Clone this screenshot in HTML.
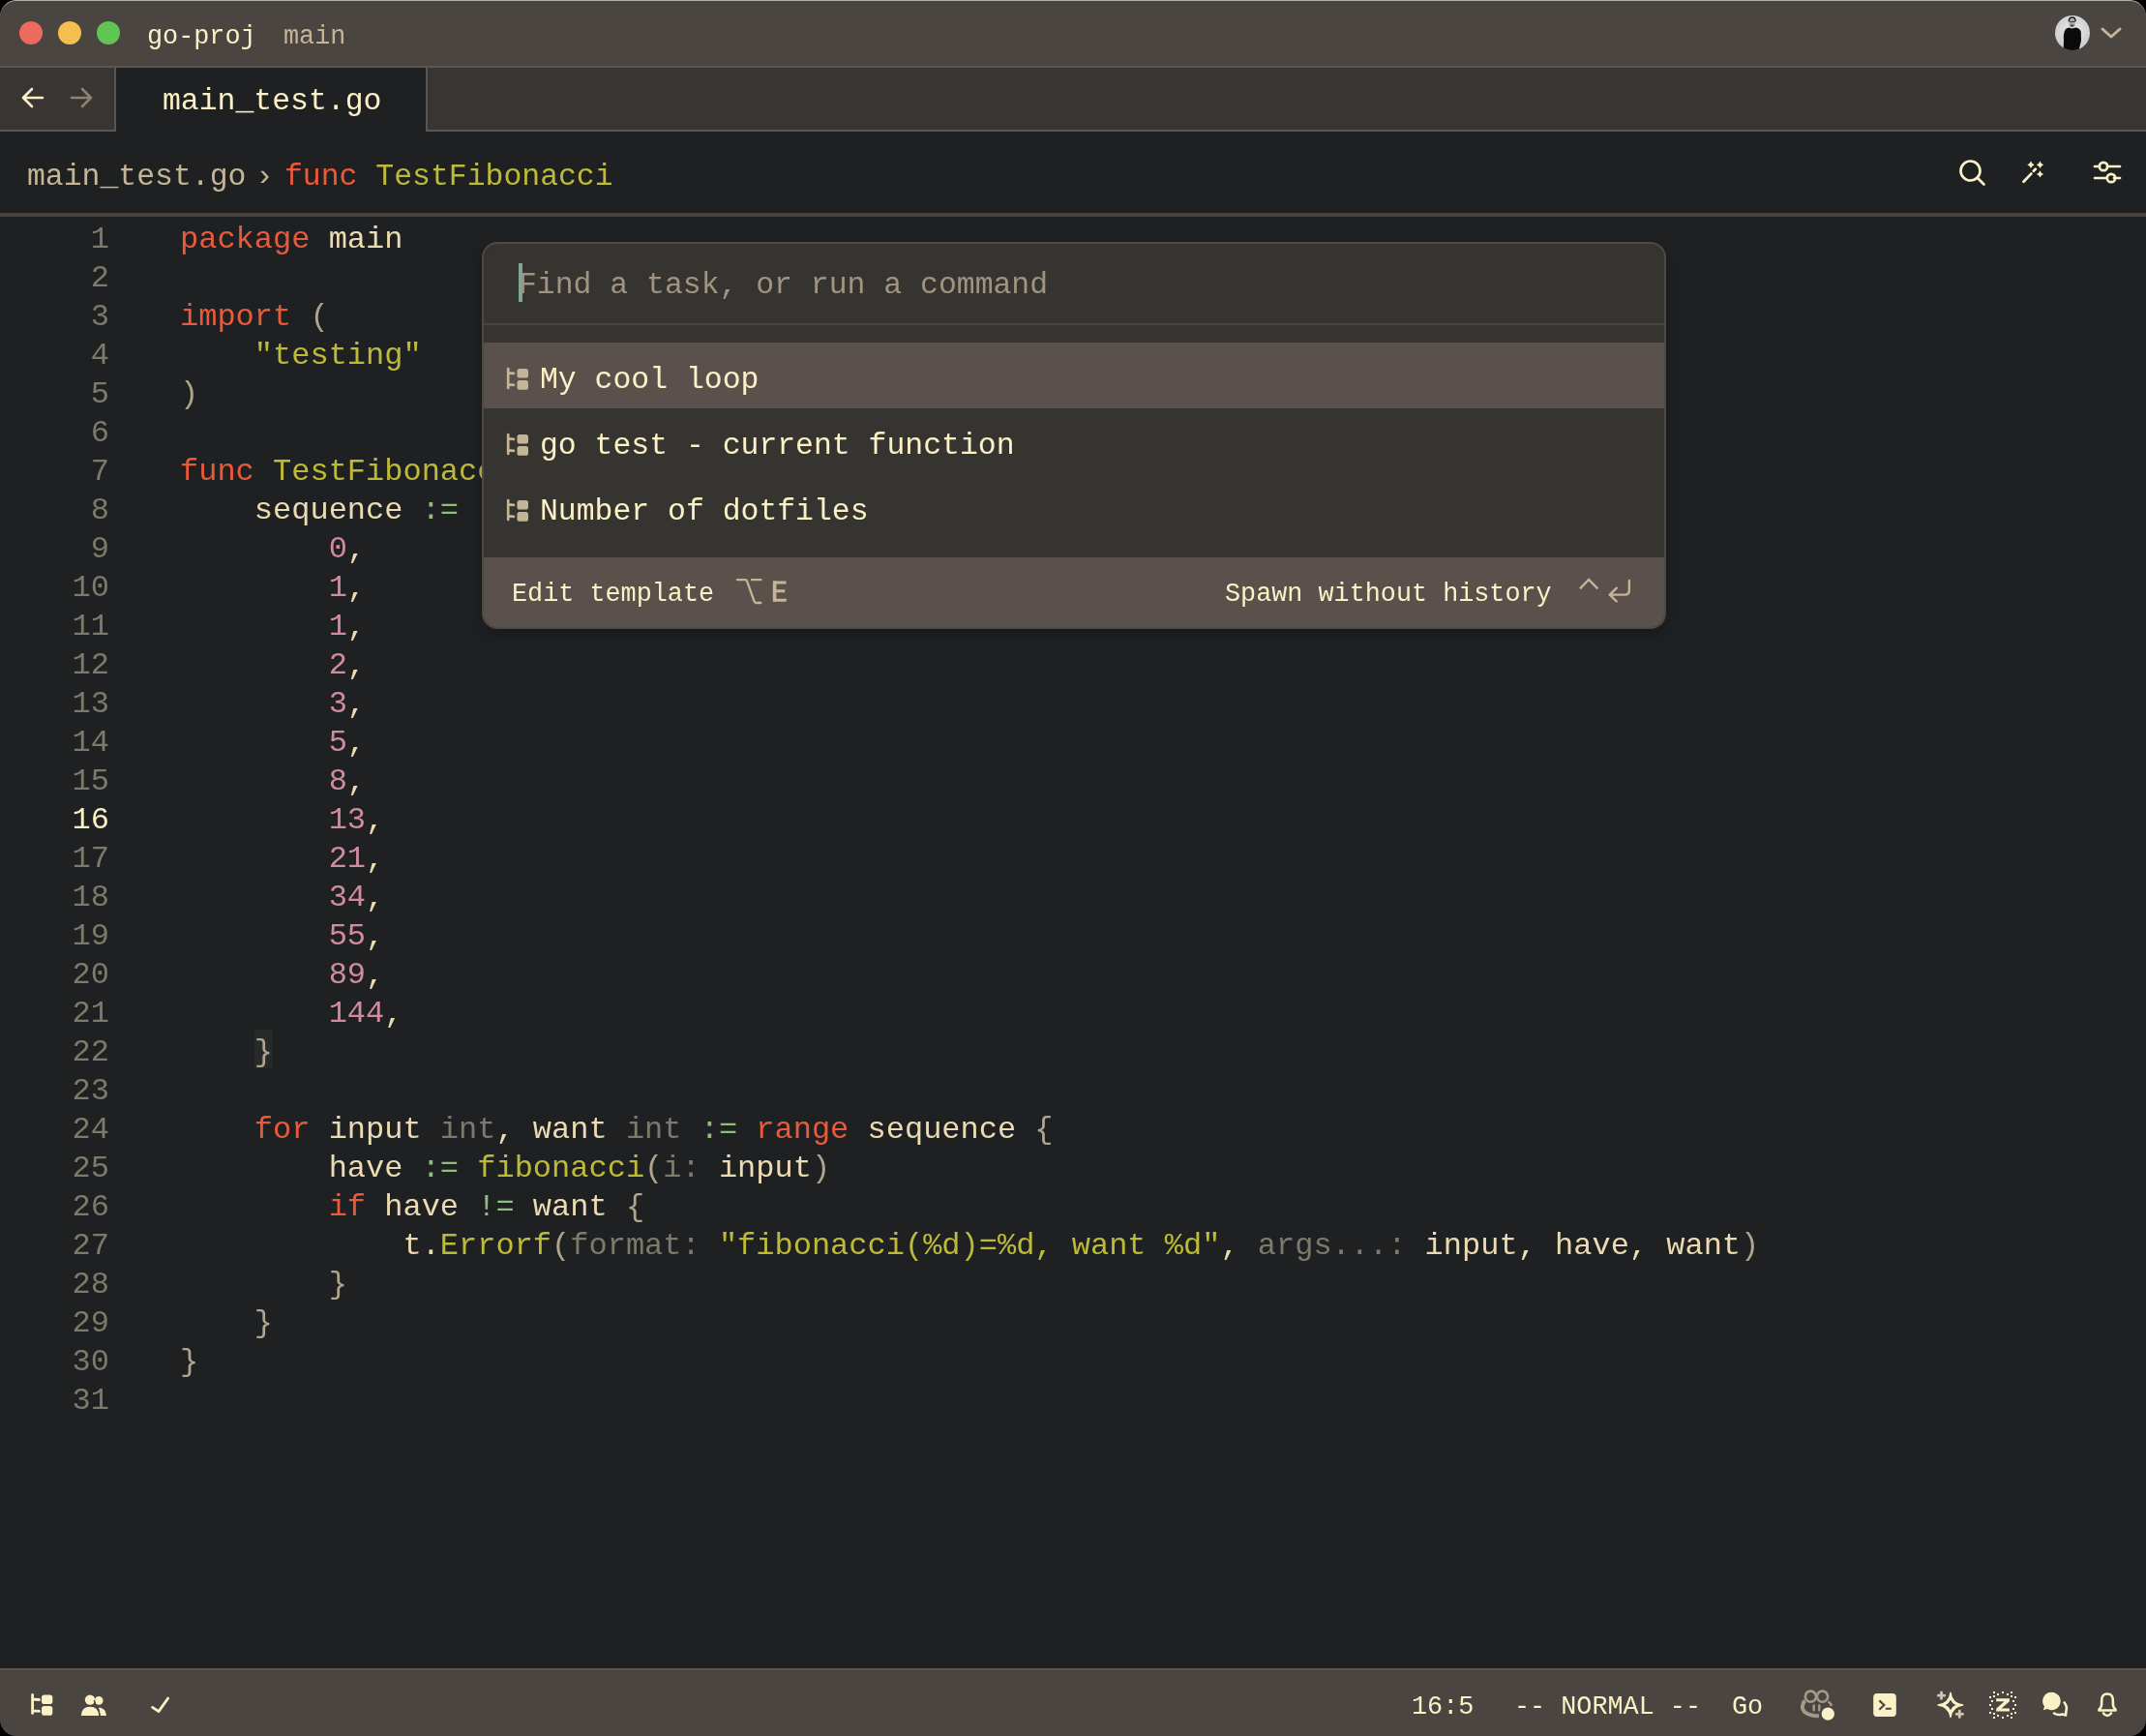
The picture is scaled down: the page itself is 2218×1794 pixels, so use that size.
<!DOCTYPE html>
<html><head><meta charset="utf-8">
<style>
*{margin:0;padding:0;box-sizing:border-box}
html,body{width:2218px;height:1794px;background:#000;overflow:hidden}
body{font-family:"Liberation Mono",monospace;color:#fbf1c7;position:relative}
#win{position:absolute;left:0;top:0;width:2218px;height:1794px;border-radius:17px;overflow:hidden;background:#1f2022;will-change:transform}
.abs{position:absolute}
.t{position:absolute;white-space:pre;line-height:40px}
.ui{font-size:31.45px}
.sm{font-size:26.8px}
.code{font-size:32px}
/* syntax */
.k{color:#e95a3b}.f{color:#bcba38}.n{color:#d08aa2}.o{color:#8fbf7f}.p{color:#b0a48e}.v{color:#ebdbb2}.h{color:#7c7a6b}
</style></head><body>
<svg width="0" height="0" style="position:absolute"><defs>
<g id="taskico"><path d="M3.2 2 V22 M3.2 6.3 Q6 6.3 9 6.8 M3.2 18.3 Q6 18.3 9 18.8" stroke-width="2.7" stroke-linecap="round" fill="none"/><rect x="12.5" y="2" width="11.5" height="9.6" rx="2.6" stroke="none"/><rect x="12.5" y="14" width="11.5" height="9.8" rx="2.6" stroke="none"/></g>
</defs></svg>
<div id="win">
  <!-- title bar -->
  <div class="abs" style="left:0;top:0;width:2218px;height:68px;background:#4a4541"></div>
  <div class="abs" style="left:0;top:0;width:2218px;height:40px;border-top:1.6px solid #b3b1ad;border-radius:17px 17px 0 0"></div>
  <div class="abs" style="left:0;top:68px;width:2218px;height:2px;background:#5d554f"></div>
  <div class="abs" style="left:20px;top:22px;width:24px;height:24px;border-radius:50%;background:#ed6a5e"></div>
  <div class="abs" style="left:60px;top:22px;width:24px;height:24px;border-radius:50%;background:#f4bf4f"></div>
  <div class="abs" style="left:100px;top:22px;width:24px;height:24px;border-radius:50%;background:#61c554"></div>
  <div class="t sm" style="left:152px;top:18px;color:#fbf1c7">go-proj</div>
  <div class="t sm" style="left:293px;top:18px;color:#c5b597">main</div>
  <!-- avatar -->
  <svg class="abs" style="left:2124px;top:16px" width="36" height="36" viewBox="0 0 36 36">
    <defs><clipPath id="av"><circle cx="18" cy="18" r="18"/></clipPath>
    <radialGradient id="avg" cx="0.5" cy="0.45" r="0.6"><stop offset="0" stop-color="#ececec"/><stop offset="1" stop-color="#c9c9c9"/></radialGradient></defs>
    <g clip-path="url(#av)">
      <rect width="36" height="36" fill="url(#avg)"/>
      <ellipse cx="17.6" cy="8" rx="3.2" ry="4.6" fill="#a8a8a8"/>
      <path d="M14.2 6.2 Q14.5 2 17.8 2 Q21 2 21.2 6.2" fill="none" stroke="#1a1a1a" stroke-width="1.4"/>
      <path d="M15 6.5 H20.5" stroke="#333" stroke-width="0.9"/>
      <path d="M16.2 9.6 Q17.5 11.8 19 9.8" fill="none" stroke="#2a2a2a" stroke-width="1.3"/>
      <path d="M8.6 36 L9 26 Q8.4 20 9.8 16 Q10.6 13.2 14 12.4 L17.5 13.4 L21.5 12.4 Q26 13 26.8 17 L27 26 L24.5 36 Z" fill="#0b0b0b"/>
    </g>
  </svg>
  <svg class="abs" style="left:2170px;top:26px" width="24" height="16" viewBox="0 0 24 16"><path d="M3 4 L12 12 L21 4" fill="none" stroke="#c5b597" stroke-width="3" stroke-linecap="round" stroke-linejoin="round"/></svg>

  <!-- tab bar -->
  <div class="abs" style="left:0;top:70px;width:2218px;height:66px;background:#383532"></div>
  <div class="abs" style="left:0;top:134px;width:2218px;height:2px;background:#5d554f"></div>
  <div class="abs" style="left:118px;top:70px;width:2px;height:66px;background:#5d554f"></div>
  <div class="abs" style="left:120px;top:70px;width:320px;height:66px;background:#1f2022"></div>
  <div class="abs" style="left:440px;top:70px;width:2px;height:66px;background:#5d554f"></div>
  <svg class="abs" style="left:20px;top:88px" width="28" height="26" viewBox="0 0 28 26"><path d="M24 13 H5 M13 4 L4 13 L13 22" fill="none" stroke="#fbf1c7" stroke-width="2.6" stroke-linecap="round" stroke-linejoin="round"/></svg>
  <svg class="abs" style="left:70px;top:88px" width="28" height="26" viewBox="0 0 28 26"><path d="M4 13 H23 M15 4 L24 13 L15 22" fill="none" stroke="#8e8372" stroke-width="2.6" stroke-linecap="round" stroke-linejoin="round"/></svg>
  <div class="t ui" style="left:168px;top:85px;color:#fbf1c7">main_test.go</div>

  <!-- toolbar -->
  <div class="abs" style="left:0;top:220px;width:2218px;height:4px;background:#48433f"></div>
  <div class="t ui" style="left:28px;top:163px;color:#c5b597">main_test.go</div>
  <div class="t ui" style="left:264px;top:163px;color:#c5b597">›</div>
  <div class="t ui" style="left:294px;top:163px"><span class="k">func</span> <span class="f">TestFibonacci</span></div>
  <svg class="abs" style="left:2020px;top:160px" width="36" height="36" viewBox="0 0 36 36"><circle cx="16.5" cy="16.5" r="10" fill="none" stroke="#fbf1c7" stroke-width="2.7"/><path d="M24 24 L30.5 30.5" stroke="#fbf1c7" stroke-width="2.7" stroke-linecap="round"/></svg>
  <svg class="abs" style="left:2084px;top:160px" width="36" height="36" viewBox="0 0 36 36">
    <path d="M7.5 27.7 L15.3 19.6" stroke="#fbf1c7" stroke-width="2.8" stroke-linecap="round"/>
    <path d="M17.8 16.8 L19.8 14.8" stroke="#fbf1c7" stroke-width="2.8" stroke-linecap="round"/>
    <path d="M15 6.6000000000000005 Q15.9 9.4 18.7 10.3 Q15.9 11.200000000000001 15 14.0 Q14.1 11.200000000000001 11.3 10.3 Q14.1 9.4 15 6.6000000000000005 Z M24.5 6.6000000000000005 Q25.4 9.4 28.2 10.3 Q25.4 11.200000000000001 24.5 14.0 Q23.6 11.200000000000001 20.8 10.3 Q23.6 9.4 24.5 6.6000000000000005 Z M24.5 16.2 Q25.4 19.0 28.2 19.9 Q25.4 20.799999999999997 24.5 23.599999999999998 Q23.6 20.799999999999997 20.8 19.9 Q23.6 19.0 24.5 16.2 Z" fill="#fbf1c7"/>
  </svg>
  <svg class="abs" style="left:2160px;top:160px" width="36" height="36" viewBox="0 0 36 36">
    <path d="M5 12 H10 M18 12 H31 M5 24 H17 M25 24 H31" stroke="#fbf1c7" stroke-width="2.7" stroke-linecap="round"/>
    <circle cx="14" cy="12" r="4.2" fill="none" stroke="#fbf1c7" stroke-width="2.7"/>
    <circle cx="22" cy="24" r="4.2" fill="none" stroke="#fbf1c7" stroke-width="2.7"/>
  </svg>

  <!-- editor -->
  <div class="abs" style="left:263px;top:1064px;width:19px;height:40px;background:#262b2a"></div>
  <div class="t code" id="gutter" style="left:0;top:228px;width:113px;text-align:right;color:#7c7a6b">1
2
3
4
5
6
7
8
9
10
11
12
13
14
15
<span style="color:#fbf1c7">16</span>
17
18
19
20
21
22
23
24
25
26
27
28
29
30
31</div>
  <div class="t code v" id="code" style="left:186px;top:228px"><span class="k">package</span> main

<span class="k">import</span> <span class="p">(</span>
    <span class="f">"testing"</span>
<span class="p">)</span>

<span class="k">func</span> <span class="f">TestFibonacci</span><span class="p">(</span>t *testing.T<span class="p">)</span> <span class="p">{</span>
    sequence <span class="o">:=</span> []int{
        <span class="n">0</span>,
        <span class="n">1</span>,
        <span class="n">1</span>,
        <span class="n">2</span>,
        <span class="n">3</span>,
        <span class="n">5</span>,
        <span class="n">8</span>,
        <span class="n">13</span>,
        <span class="n">21</span>,
        <span class="n">34</span>,
        <span class="n">55</span>,
        <span class="n">89</span>,
        <span class="n">144</span>,
    <span class="p">}</span>

    <span class="k">for</span> input <span class="h">int</span>, want <span class="h">int</span> <span class="o">:=</span> <span class="k">range</span> sequence <span class="p">{</span>
        have <span class="o">:=</span> <span class="f">fibonacci</span><span class="p">(</span><span class="h">i:</span> input<span class="p">)</span>
        <span class="k">if</span> have <span class="o">!=</span> want <span class="p">{</span>
            t.<span class="f">Errorf</span><span class="p">(</span><span class="h">format:</span> <span class="f">"fibonacci(%d)=%d, want %d"</span>, <span class="h">args...:</span> input, have, want<span class="p">)</span>
        <span class="p">}</span>
    <span class="p">}</span>
<span class="p">}</span>
</div>

  
  <div class="abs" style="left:498px;top:250px;width:1224px;height:400px;border:2px solid #504843;border-radius:16px;background:#363431;overflow:hidden;box-shadow:0 6px 14px rgba(0,0,0,0.22)">
    <div class="abs" style="left:0;top:82px;width:1220px;height:2px;background:#4b4440"></div>
    <div class="abs" style="left:36px;top:20px;width:4px;height:40px;background:#83a598"></div>
    <div class="t ui" style="left:36px;top:23px;color:#a09380">Find a task, or run a command</div>
    <div class="abs" style="left:0;top:102px;width:1220px;height:68px;background:#5a514c"></div>
    <svg class="abs" style="left:22px;top:127px" width="26" height="24" viewBox="0 0 26 24"><use href="#taskico" fill="#c5b597" stroke="#c5b597"/></svg>
    <svg class="abs" style="left:22px;top:195px" width="26" height="24" viewBox="0 0 26 24"><use href="#taskico" fill="#c5b597" stroke="#c5b597"/></svg>
    <svg class="abs" style="left:22px;top:263px" width="26" height="24" viewBox="0 0 26 24"><use href="#taskico" fill="#c5b597" stroke="#c5b597"/></svg>
    <div class="t ui" style="left:58px;top:121px">My cool loop</div>
    <div class="t ui" style="left:58px;top:189px">go test - current function</div>
    <div class="t ui" style="left:58px;top:257px">Number of dotfiles</div>
    <div class="abs" style="left:0;top:323.5px;width:1220px;height:80px;background:#5a514c"></div>
    <div class="t sm" style="left:29px;top:342px">Edit template</div>
    <svg class="abs" style="left:258px;top:340px" width="34" height="36" viewBox="0 0 34 36"><path d="M4 7.2 H12.3 Q13.6 7.2 14.1 8.6 L21.6 29.6 Q22.1 31 23.6 31 H28.4 M19 7.2 H28.4" fill="none" stroke="#c5b597" stroke-width="2.3" stroke-linecap="round"/></svg>
    <svg class="abs" style="left:296px;top:346px" width="20" height="30" viewBox="0 0 20 30"><path d="M4.6 2.5 V23.6" stroke="#c5b597" stroke-width="3.6"/><path d="M3 4 H16.5 M3 12.8 H15.2 M3 22.3 H16.8" fill="none" stroke="#c5b597" stroke-width="3"/></svg>
    <div class="t sm" style="left:766px;top:342px">Spawn without history</div>
    <svg class="abs" style="left:1130px;top:340px" width="26" height="22" viewBox="0 0 26 22"><path d="M3 16.4 L12 7 L21.4 16.4" fill="none" stroke="#c5b597" stroke-width="2.3"/></svg>
    <svg class="abs" style="left:1160px;top:346px" width="30" height="32" viewBox="0 0 30 32"><path d="M23.9 2 V12 Q23.9 16.6 19.3 16.6 H4 M10.8 9.7 L3.7 16.6 L10.8 23.5" fill="none" stroke="#c5b597" stroke-width="2.4" stroke-linecap="round" stroke-linejoin="round"/></svg>
  </div>


  <!-- status bar -->
  <div class="abs" style="left:0;top:1724px;width:2218px;height:70px;background:#4a4541"></div>
  <div class="abs" style="left:0;top:1724px;width:2218px;height:2px;background:#5d554f"></div>
  
  <svg class="abs" style="left:30px;top:1749px" width="27" height="26" viewBox="0 0 27 26"><g transform="translate(0,0)"><path d="M3.6 2.5 V21.5 M3.6 7 Q7 7 10.5 7.5 M3.6 18.8 Q7 18.8 10.5 19.3" stroke="#fbf1c7" stroke-width="2.8" stroke-linecap="round" fill="none"/><rect x="13" y="2.6" width="11.3" height="9.4" rx="2.8" fill="#fbf1c7"/><rect x="13" y="13.9" width="11.3" height="9.8" rx="2.8" fill="#fbf1c7"/></g></svg>
  <svg class="abs" style="left:82px;top:1748px" width="30" height="27" viewBox="0 0 30 27">
    <circle cx="11" cy="8.6" r="5.2" fill="#fbf1c7"/>
    <circle cx="20.2" cy="9.4" r="4.3" fill="#fbf1c7"/>
    <path d="M20 16.5 Q27.5 17 28 25 H21.5 Z" fill="#fbf1c7"/>
    <path d="M1.9 25 Q2.3 15.8 11 15.8 Q19.7 15.8 20.2 25 Z" fill="#fbf1c7"/>
    <path d="M15.2 9 A5.6 5.6 0 0 1 16.2 13.5" stroke="#4a4541" stroke-width="1.3" fill="none"/>
    <path d="M19 17.2 Q20.8 20 21.2 25" stroke="#4a4541" stroke-width="1.4" fill="none"/>
  </svg>
  <svg class="abs" style="left:154px;top:1751px" width="24" height="21" viewBox="0 0 24 21"><path d="M3.5 13.3 L10 17.6 L19.7 4" fill="none" stroke="#fbf1c7" stroke-width="2.7" stroke-linecap="round" stroke-linejoin="round"/></svg>
  <div class="t sm" style="left:1459px;top:1744px">16:5</div>
  <div class="t sm" style="left:1565px;top:1744px">-- NORMAL --</div>
  <div class="t sm" style="left:1790px;top:1744px">Go</div>
  <svg class="abs" style="left:1860px;top:1744px" width="40" height="36" viewBox="0 0 40 36">
    <circle cx="11.4" cy="9.2" r="5.6" fill="none" stroke="#a39b87" stroke-width="2.6"/>
    <circle cx="23.5" cy="9.2" r="5.6" fill="none" stroke="#a39b87" stroke-width="2.6"/>
    <path d="M5.5 13.5 Q2 17 3.2 22 Q5 27.5 15 29 L20 29.3" fill="none" stroke="#a39b87" stroke-width="4"/>
    <path d="M29.5 14.5 Q32 16 33 19" fill="none" stroke="#a39b87" stroke-width="2.5"/>
    <path d="M14.7 18.5 V23.3 M20.3 18.5 V23.3" stroke="#a39b87" stroke-width="2.4" stroke-linecap="round"/>
    <circle cx="29.3" cy="27.2" r="6.6" fill="#fbf1c7"/>
  </svg>
  <svg class="abs" style="left:1934px;top:1748px" width="28" height="28" viewBox="0 0 28 28">
    <rect x="2.2" y="1.9" width="23.6" height="24.1" rx="3.8" fill="#fbf1c7"/>
    <path d="M8.3 9.4 L13.4 14 L8.3 18.7 M14.8 17.8 H20.8" fill="none" stroke="#4a4541" stroke-width="2.1"/>
  </svg>
  <svg class="abs" style="left:2000px;top:1746px" width="32" height="32" viewBox="0 0 32 32">
    <path fill-rule="evenodd" d="M16 3.3 Q17.5 14.5 28.7 16 Q17.5 17.5 16 28.5 Q14.5 17.5 3.1 16 Q14.5 14.5 16 3.3 Z M16 7.6 Q17.1 14.9 24.4 16 Q17.1 17.1 16 24.4 Q14.9 17.1 7.6 16 Q14.9 14.9 16 7.6 Z" fill="#fbf1c7" stroke="#fbf1c7" stroke-width="1.4" stroke-linejoin="round"/>
    <path d="M6.5 3 V9.4 M3.3 6.2 H9.7 M25.3 22.1 V28.5 M22.1 25.3 H28.5" stroke="#cfc6ad" stroke-width="2.8" stroke-linecap="round"/>
  </svg>
  <svg class="abs" style="left:2054px;top:1746px" width="32" height="32" viewBox="0 0 32 32" fill="#fbf1c7">
    <g>
      <rect x="6" y="2" width="2" height="2"/><rect x="15" y="2" width="2" height="2"/><rect x="24" y="2" width="2" height="2"/>
      <rect x="10" y="4" width="2" height="2"/><rect x="20" y="4" width="2" height="2"/>
      <rect x="6" y="6" width="2" height="2"/><rect x="24" y="6" width="2" height="2"/>
      <rect x="2" y="7" width="2" height="2"/><rect x="28" y="7" width="2" height="2"/>
      <rect x="4" y="11" width="2" height="2"/><rect x="26" y="11" width="2" height="2"/>
      <rect x="2" y="15" width="2" height="2"/><rect x="28" y="15" width="2" height="2"/>
      <rect x="4" y="19" width="2" height="2"/><rect x="26" y="19" width="2" height="2"/>
      <rect x="2" y="23" width="2" height="2"/><rect x="28" y="23" width="2" height="2"/>
      <rect x="6" y="24" width="2" height="2"/><rect x="24" y="24" width="2" height="2"/>
      <rect x="10" y="26" width="2" height="2"/><rect x="20" y="26" width="2" height="2"/>
      <rect x="6" y="28" width="2" height="2"/><rect x="15" y="28" width="2" height="2"/><rect x="24" y="28" width="2" height="2"/>
    </g>
    <path d="M9.2 9.3 H22.9 V12.2 L14.6 19.6 H22.9 V22.6 H9.2 V19.7 L17.5 12.3 H9.2 Z"/>
  </svg>
  <svg class="abs" style="left:2108px;top:1746px" width="32" height="32" viewBox="0 0 32 32">
    <path d="M12.5 2.8 A9.2 9.2 0 1 1 8 20 L3.8 21.2 L5 17.5 A9.2 9.2 0 0 1 12.5 2.8 Z" fill="#fbf1c7"/>
    <path d="M25.6 13.5 Q29 17.5 27.4 22.5 L27 26.5 L23.5 25.5 Q18.5 27 15 24.5" fill="none" stroke="#fbf1c7" stroke-width="2.6" stroke-linecap="round" stroke-linejoin="round"/>
  </svg>
  <svg class="abs" style="left:2164px;top:1746px" width="28" height="32" viewBox="0 0 28 32">
    <path d="M14 4.5 Q8 4.5 8.2 11.5 L8 16.5 Q7.5 19 5.5 20.5 V21.5 H22.5 V20.5 Q20.5 19 20 16.5 L19.8 11.5 Q20 4.5 14 4.5 Z" fill="none" stroke="#fbf1c7" stroke-width="2.6" stroke-linejoin="round"/>
    <path d="M10 24.5 Q14 29.5 18 24.5" fill="none" stroke="#fbf1c7" stroke-width="2.6" stroke-linecap="round"/>
  </svg>

</div>
</body></html>
